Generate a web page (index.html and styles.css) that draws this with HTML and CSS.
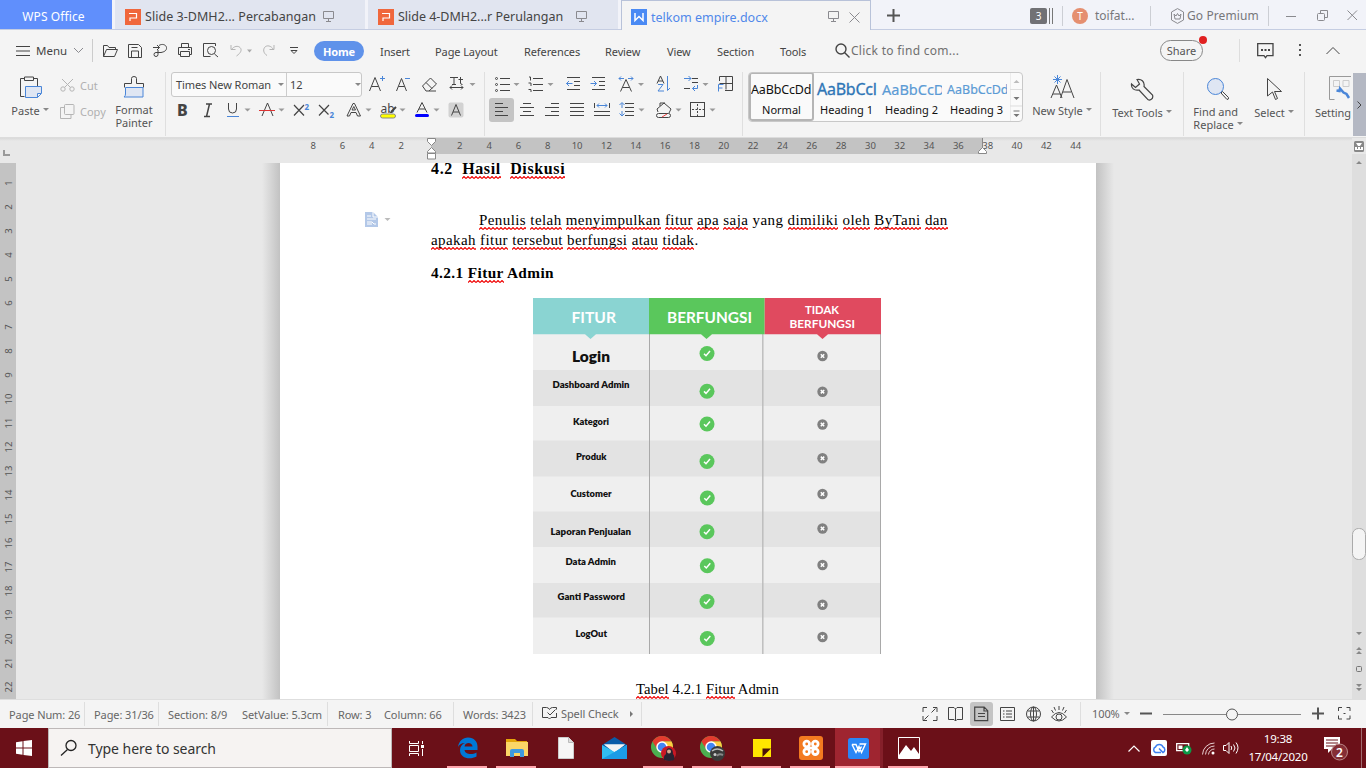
FILE: index.html
```html
<!DOCTYPE html>
<html lang="en">
<head>
<meta charset="utf-8">
<title>telkom empire.docx - WPS Office</title>
<link rel="stylesheet" href="styles.css">
</head>
<body>
<header class="tabs">
  <div class="tab-home">WPS Office</div>
  <div class="tab">
    <svg class="app-icon" width="16" height="16" viewBox="0 0 16 16"><rect width="16" height="16" fill="#f0673c"/><path d="M4 4.500h7.500v4.500H5.500M5 8.500V12" fill="none" stroke="#fff" stroke-width="1.200"/></svg>
    <span class="tab-title t1">Slide 3-DMH2... Percabangan</span>
    <svg width="12" height="12" viewBox="0 0 12 12" class="line gray"><path d="M.5.5h10v7H.5zM5.500 7.500v3M3 10.500h5"/></svg>
  </div>
  <div class="tab">
    <svg class="app-icon" width="16" height="16" viewBox="0 0 16 16"><rect width="16" height="16" fill="#f0673c"/><path d="M4 4.500h7.500v4.500H5.500M5 8.500V12" fill="none" stroke="#fff" stroke-width="1.200"/></svg>
    <span class="tab-title t2">Slide 4-DMH2...r Perulangan</span>
    <svg width="12" height="12" viewBox="0 0 12 12" class="line gray"><path d="M.5.5h10v7H.5zM5.500 7.500v3M3 10.500h5"/></svg>
  </div>
  <div class="tab active">
    <svg class="app-icon" width="16" height="16" viewBox="0 0 16 16"><rect width="16" height="16" fill="#4a8af4"/><path d="M4 4v7.500l4-4 4 4V4" fill="none" stroke="#fff" stroke-width="1.500"/></svg>
    <span class="tab-title t3">telkom empire.docx</span>
    <svg width="12" height="12" viewBox="0 0 12 12" class="line gray"><path d="M.5.5h10v7H.5zM5.500 7.500v3M3 10.500h5"/></svg>
    <svg class="close line gray" width="11" height="11" viewBox="0 0 11 11"><path d="M.5.5l10 10M10.500.5l-10 10"/></svg>
  </div>
  <svg class="plus" width="13" height="13" viewBox="0 0 13 13"><path d="M6.500 0v13M0 6.500h13" stroke="#555" stroke-width="2"/></svg>
  <div class="window-bar">
    <div class="badge">3</div>
    <div class="bars"></div>
    <i class="vsep"></i>
    <div class="avatar">T</div>
    <span class="user">toifat...</span>
    <i class="vsep"></i>
    <svg width="15" height="16" viewBox="0 0 15 16" class="line gray"><path d="M7.500.6l6 3.400v8l-6 3.400-6-3.400V4zM4 6l1 5h5l1-5-2 2-1.500-2.500L6 8z"/></svg>
    <span class="premium">Go Premium</span>
    <i class="vsep"></i>
    <svg width="11" height="11" viewBox="0 0 11 11" class="line gray"><path d="M0 6.500h10"/></svg>
    <svg width="12" height="12" viewBox="0 0 12 12" class="line gray"><rect x=".5" y="3.500" width="7" height="7" rx="1"/><path d="M3.500 3V.5h7v7H8"/></svg>
    <svg width="11" height="11" viewBox="0 0 11 11" class="line gray"><path d="M.5.5l9.500 9.500M10 .5L.5 10"/></svg>
  </div>
</header>

<nav class="menubar">
  <svg width="15" height="12" viewBox="0 0 15 12" class="line"><path d="M0 1.500h14M0 6h14M0 10.500h14"/></svg>
  <span class="menu-word">Menu</span>
  <svg width="11" height="7" viewBox="0 0 11 7" class="line gray"><path d="M1 1l4.500 4.500L10 1"/></svg>
  <i class="msep"></i>
  <svg width="17" height="14" viewBox="0 0 17 14" class="line"><path d="M1.500 12.500V1.500h4l1.500 2h6.500v2M1.500 12.500l3-7h11l-3 7z"/></svg>
  <svg width="17" height="14" viewBox="0 0 17 14" class="line"><path d="M1.500.5h10l3 3v10h-13zM4.500 13v-6h7v6M4.500 3.500h6"/></svg>
  <svg width="17" height="16" viewBox="0 0 17 16" class="line"><path d="M0 4.500h6.500M4 2l2.500 2.500L4 7M6 2.500c3-2 7-1 7.500 2S11 9 8 9.500H3a2 2 0 1 0 2 2V7"/></svg>
  <svg width="17" height="15" viewBox="0 0 17 15" class="line"><path d="M4.500 4V.5h7V4M3.500 11.500h-2v-7h13v7h-2M3.500 8.500h9v5h-9zM11 6.500h2"/></svg>
  <svg width="17" height="15" viewBox="0 0 17 15" class="line"><path d="M12.500 3V.5H.5v13h7M11.500 11l3.500 3"/><circle cx="8.500" cy="7.500" r="4"/></svg>
  <svg width="13" height="13" viewBox="0 0 13 13" class="line pale"><path d="M1 1v4.500h4.500M1.500 5.500C4 2 8 1.500 10 3.500s1.500 5-3.500 8.500"/></svg>
  <svg width="6" height="4" viewBox="0 0 6 4"><path d="M0 .5h5L2.500 3.500z" fill="#aaa"/></svg>
  <svg width="13" height="13" viewBox="0 0 13 13" class="line pale"><path d="M12 1v4.500H7.500M11.500 5.500C9 1.500 5 1 3 3s-2 6 2 8.500"/></svg>
  <svg width="9" height="8" viewBox="0 0 9 8" class="line"><path d="M0 .5h8M1 3.500h6L4 6.500z"/></svg>
  <span class="home">Home</span>
  <span class="mi">Insert</span><span class="mi">Page Layout</span><span class="mi">References</span><span class="mi">Review</span><span class="mi">View</span><span class="mi">Section</span><span class="mi">Tools</span>
  <svg width="16" height="17" viewBox="0 0 16 17" class="line"><g stroke-width="1.400"><circle cx="6" cy="7" r="5"/><path d="M9.500 10.500l5 5"/></g></svg>
  <span class="find">Click to find com...</span>
  <span class="share">Share</span>
  <i class="msep light"></i>
  <svg width="17" height="17" viewBox="0 0 17 17" class="line"><path d="M.7 1.700h15.300v12H10l-1.500 2-1.500-2H.7z" stroke-width="1.300"/><path d="M4 8h2M7.500 8h2M11 8h2" stroke-width="2"/></svg>
  <svg width="3" height="13" viewBox="0 0 3 13" fill="#555"><path d="M0 0h2v2H0zM0 5h2v2H0zM0 10h2v2H0z"/></svg>
  <svg width="15" height="8" viewBox="0 0 15 8" class="line"><path d="M.5 7l6.500-6.500L13.500 7"/></svg>
</nav>

<section class="ribbon">
  <div class="tool paste">
    <svg width="24" height="24" viewBox="18 75 24 24" class="line"><path d="M24 78.500h-3.500v18h4M34 78.500h3.500V86M24.500 77h9v3.500h-9z"/><path d="M25.500 86.500h16v7l-4 4h-12zM41 93.500h-3.500v4" stroke="#4a86d8" fill="#dfe6f3"/></svg>
    <div>Paste<b class="caret"></b></div>
  </div>
  <div class="clip">
    <div><svg width="15" height="14" viewBox="0 0 15 14" class="line pale"><circle cx="3" cy="11" r="2.200"/><circle cx="12" cy="11" r="2.200"/><path d="M2 1l8.500 8.500M13 1L4.500 9.500"/></svg><span>Cut</span></div>
    <div><svg width="15" height="15" viewBox="0 0 15 15" class="line pale"><rect x="4.500" y=".5" width="9.500" height="10" rx="1"/><path d="M4 3.500H.5v11H11V11"/></svg><span>Copy</span></div>
  </div>
  <div class="tool painter">
    <svg width="24" height="24" viewBox="122 75 24 24" class="line"><path d="M124.500 87.500v-4h7v-5q0-2 2.500-2t2.500 2v5h7v4"/><path d="M125.500 87.500h17.500v9.500h-19q1.500-1 1.500-3z" stroke="#4a86d8" fill="#dfe6f3"/></svg>
    <div>Format<br>Painter</div>
  </div>
  <i class="rsep"></i>

  <div class="group font-group">
    <div class="row">
      <div class="combo"><span class="family">Times New Roman</span><b class="caret"></b><span class="size">12</span><b class="caret"></b></div>
      <svg width="27" height="24" viewBox="366 72 27 24" class="line"><path d="M369.500 91l5.500-13.500 5.500 13.500M371.500 86.500h7"/><path d="M380 78.500h5M382.500 76v5" class="blue"/></svg>
      <svg width="27" height="24" viewBox="393 72 27 24" class="line"><path d="M396.500 91l5-12.500 5 12.500M398.500 86.500h6"/><path d="M405 78.500h5" class="blue"/></svg>
      <svg width="26" height="24" viewBox="420 72 26 24" class="line"><path d="M422.500 86l8-8 6 6-7.500 7h-3zM426 82.500l6 6M429 91h7"/></svg>
      <svg width="30" height="24" viewBox="446 72 30 24" class="line"><path d="M450 77.500h8M454 77.500v7M452 84.500h4M460.500 77v6q0 1.500 2 1.500M458.500 79.500h4.500M450 87.500h13M452 85.500l-2 2 2 2M461 85.500l2 2-2 2"/><path d="M469.500 83h6l-3 3z" class="tri"/></svg>
    </div>
    <div class="row">
      <svg width="25" height="24" viewBox="171 98 25 24"><text x="177" y="116" class="glyph bold">B</text></svg>
      <svg width="26" height="24" viewBox="196 98 26 24" class="line"><path d="M206 104h6M204 116.500h6M209.500 104l-3 12.500" stroke-width="1.500"/></svg>
      <svg width="34" height="24" viewBox="222 98 34 24" class="line"><path d="M228.500 103v6q0 4 4 4t4-4v-6"/><path d="M227 116.500h12" class="blue"/><path d="M244.500 108.500h6l-3 3z" class="tri"/></svg>
      <svg width="34" height="24" viewBox="256 98 34 24" class="line"><path d="M262 116l5.500-13 5.500 13"/><path d="M259 110.500h16" stroke="#d33"/><path d="M278.500 108.500h6l-3 3z" class="tri"/></svg>
      <svg width="26" height="24" viewBox="290 98 26 24" class="line"><path d="M294 105l10 10.500M304 105l-10 10.500" stroke-width="1.200"/><text x="304.500" y="109.500" class="num">2</text></svg>
      <svg width="26" height="24" viewBox="316 98 26 24" class="line"><path d="M319 105l9.500 9.500M329 105l-10 10.500" stroke-width="1.200"/><text x="329.500" y="117.500" class="num">2</text></svg>
      <svg width="34" height="24" viewBox="342 98 34 24" class="line"><path d="M347 116l6-12.500h1.500l6 12.500h-3l-1.500-3.500h-5l-1.500 3.500zM352 110h3.500l-1.700-3.500z"/><path d="M365.500 108.500h6l-3 3z" class="tri"/></svg>
      <svg width="34" height="24" viewBox="376 98 34 24"><rect x="380.500" y="114" width="15" height="4" rx="2" fill="#ff0" stroke="#888"/><text x="380.500" y="112.500" class="glyph ab">ab</text><path d="M391 112l5-5" stroke="#444" stroke-width="2"/><path d="M399.500 108.500h6l-3 3z" class="tri"/></svg>
      <svg width="36" height="24" viewBox="410 98 36 24" class="line"><path d="M417 112.500l5-10 5 10M419 109h6"/><rect x="415" y="114" width="14" height="3" rx="1.500" fill="#00f" stroke="none"/><path d="M433.500 108.500h6l-3 3z" class="tri"/></svg>
      <svg width="24" height="24" viewBox="446 98 24 24" class="line"><rect x="448.500" y="102.500" width="15" height="15" rx="2" fill="#d2d2d2" stroke="none"/><path d="M451.500 115.500l4.500-11 4.500 11M453 112h6"/></svg>
    </div>
  </div>
  <i class="rsep"></i>

  <div class="group para-group">
    <div class="row">
      <svg width="33" height="24" viewBox="489 72 33 24" class="line"><path d="M500 78.500h10M500 84.500h10M500 90.500h10"/><circle cx="496.500" cy="78.500" r="1"/><circle cx="496.500" cy="84.500" r="1"/><circle cx="496.500" cy="90.500" r="1"/><path d="M513.500 83h6l-3 3z" class="tri"/></svg>
      <svg width="38" height="24" viewBox="522 72 38 24" class="line"><path d="M533 78.500h10M533 84.500h10M533 90.500h10M529 77h1.500v3.500M528.500 83h2.500v3M528.500 89.500h2.500v2.500"/><path d="M547.500 83h6l-3 3z" class="tri"/></svg>
      <svg width="26" height="24" viewBox="560 72 26 24" class="line"><path d="M567 77.500h13M574 81.500h6M574 85.500h6M567 89.500h13"/><path d="M566.500 83.500h6M569 81l-2.500 2.500 2.500 2.500" class="blue"/></svg>
      <svg width="27" height="24" viewBox="586 72 27 24" class="line"><path d="M592 77.500h13M599 81.500h6M599 85.500h6M592 89.500h13"/><path d="M590.500 83.500h6M594 81l2.500 2.500-2.500 2.500" class="blue"/></svg>
      <svg width="37" height="24" viewBox="613 72 37 24" class="line"><path d="M620.500 91.500l5.500-12 5.500 12M622.500 87.500h7"/><path d="M619 78.500h5M621 76.500l-2 2 2 2M628 78.500h5M631 76.500l2 2-2 2" class="blue"/><path d="M638 83h6l-3 3z" class="tri"/></svg>
      <svg width="30" height="24" viewBox="650 72 30 24" class="line"><path d="M657 83.500l3.500-7.500 3.500 7.500M658 81h5"/><path d="M658 84.500h5l-5 6.500h6M667.500 76v14.500l2.500-2.500" class="blue"/></svg>
      <svg width="34" height="24" viewBox="680 72 34 24" class="line"><path d="M692 82.500h6M684 88.500h6M692 78.500h6"/><path d="M684 78.500h7M688.500 76l2.500 2.500-2.500 2.500M697.500 85v3.500h-5M695 86l-2.500 2.500 2.500 2.500" class="blue"/><path d="M702.500 83h6l-3 3z" class="tri"/></svg>
      <svg width="24" height="24" viewBox="714 72 24 24" class="line"><path d="M719.500 81v-4.500h13v14H725M726 76.500v13M719.500 83.500h13"/><path d="M718.500 91.500v-7h5M718.500 88h4" class="blue"/></svg>
    </div>
    <div class="row">
      <svg width="25" height="24" viewBox="489 98 25 24" class="line selected"><path d="M495 103.500h8M495 107.500h13M495 111.500h8M495 115.500h13"/></svg>
      <svg width="25" height="24" viewBox="514 98 25 24" class="line"><path d="M523 103.500h8M520 107.500h14M523 111.500h8M520 115.500h14"/></svg>
      <svg width="25" height="24" viewBox="539 98 25 24" class="line"><path d="M551 103.500h8M545 107.500h14M551 111.500h8M545 115.500h14"/></svg>
      <svg width="25" height="24" viewBox="564 98 25 24" class="line"><path d="M570 103.500h14M570 107.500h14M570 111.500h14M570 115.500h14"/></svg>
      <svg width="26" height="24" viewBox="589 98 26 24" class="line"><path d="M594.500 103v5M609.500 103v5M594 111.500h16M594 115.500h16"/><path d="M597 105.500h10M599 103.500l-2 2 2 2M605 103.500l2 2-2 2" class="blue"/></svg>
      <svg width="35" height="24" viewBox="615 98 35 24" class="line"><path d="M625 103.500h9M625 107.500h9M625 111.500h9M625 115.500h9"/><path d="M622 103v5M619.500 105l2.500-2.500 2.500 2.500M622 111v5M619.500 113.500l2.500 2.500 2.500-2.500" class="blue"/><path d="M638.500 108.500h6l-3 3z" class="tri"/></svg>
      <svg width="35" height="24" viewBox="650 98 35 24" class="line"><path d="M658 112l-1-3 7-6 7 6-2 4M660 106v-3h5"/><rect x="656.500" y="113.500" width="14" height="4" rx="2"/><path d="M662 117l5-3" stroke="#e44"/><path d="M675.500 108.500h6l-3 3z" class="tri"/></svg>
      <svg width="35" height="24" viewBox="685 98 35 24" class="line"><rect x="690.500" y="102.500" width="14" height="14"/><path d="M697.500 104v12M692 109.500h12" stroke-dasharray="2 1.500"/><path d="M709.500 108.500h6l-3 3z" class="tri"/></svg>
    </div>
  </div>
  <i class="rsep"></i>

  <div class="styles">
    <div class="style current"><span class="sample s0">AaBbCcDd</span><span>Normal</span></div>
    <div class="style"><span class="sample s1">AaBbCcl</span><span>Heading 1</span></div>
    <div class="style"><span class="sample s2">AaBbCcD</span><span>Heading 2</span></div>
    <div class="style"><span class="sample s3">AaBbCcDd</span><span>Heading 3</span></div>
    <svg width="12" height="48" viewBox="0 0 12 48"><path d="M0 0v48M0 16.500h12M0 33h12" stroke="#ddd"/><path d="M3.500 10h6l-3-3z" fill="#bbb"/><path d="M3.500 24h6l-3 3zM3.500 41h6l-3 3z" fill="#777"/><path d="M3.500 38h6" stroke="#777"/></svg>
  </div>
  <div class="tool newstyle">
    <svg width="26" height="26" viewBox="1047 74 26 26" class="line"><path d="M1049 98l5.500-13 5.500 13M1051 94h7M1058.500 98l6.500-18.500 7 18.500M1061 92h8"/><path d="M1055.500 75v9M1051 79.500h9M1052.500 76.500l6 6M1058.500 76.500l-6 6" class="blue"/></svg>
    <div>New Style<b class="caret"></b></div>
  </div>
  <i class="rsep"></i>
  <div class="tool texttools">
    <svg width="24" height="24" viewBox="1131 78 24 24" class="line"><path d="M1138 79.500c4-1 8 2 7 7l8.500 8.500q1 3-1.500 4.500t-4-1l-8-8.500c-5 1-8-2-7.500-6l4 3.500 4-3.500z" stroke-width="1.200"/></svg>
    <div>Text Tools<b class="caret"></b></div>
  </div>
  <i class="rsep"></i>
  <div class="tool findreplace">
    <svg width="24" height="24" viewBox="1208 77 24 24" class="line"><circle cx="1217.500" cy="86.500" r="8" fill="#dfe6f3" stroke="#4a86d8"/><path d="M1223 93l1.500-1.500 6 6q.5 2-1.500 2z"/></svg>
    <div class="left">Find and<br>Replace<b class="caret"></b></div>
  </div>
  <div class="tool select">
    <svg width="17" height="24" viewBox="1267 77 17 24" class="line"><path d="M1268.500 78.500V96l5-4 3 7.500 2-1-3-7h7z"/></svg>
    <div>Select<b class="caret"></b></div>
  </div>
  <i class="rsep"></i>
  <div class="tool setting">
    <svg width="22" height="25" viewBox="1329 77 22 25" class="line"><path d="M1351 77.500h-21.500v23h5" stroke="#999"/><path d="M1333.500 81.500h6v6h-6zM1343 81.500h6v6h-6z" stroke="#ccc"/><path d="M1336.500 91.500l3 .5.500-2.500 3.500 4 3 1.500 2.500 4" stroke="#4a86d8" stroke-width="2.500"/></svg>
    <div>Setting</div>
  </div>
  <div class="more"><svg width="5" height="8" viewBox="0 0 5 8" class="line"><path d="M.5.5L4 4 .5 7.500"/></svg></div>
</section>

<main class="editor">
  <div class="hruler">
    <svg class="tabstop" width="7" height="7" viewBox="0 0 7 7"><path d="M1 0v5h6" fill="none" stroke="#999" stroke-width="2"/></svg>
    <div class="ticks"><span>8</span><span>6</span><span>4</span><span>2</span><span></span><span>2</span><span>4</span><span>6</span><span>8</span><span>10</span><span>12</span><span>14</span><span>16</span><span>18</span><span>20</span><span>22</span><span>24</span><span>26</span><span>28</span><span>30</span><span>32</span><span>34</span><span>36</span><span>38</span><span>40</span><span>42</span><span>44</span></div>
    <svg class="indent" width="9" height="22" viewBox="0 0 9 22"><path d="M.5.5h8v3l-4 4-4-4zM4.500 9.500l4 4v1.500h-8v-1.500zM.5 15.500h8v5.500h-8z" fill="#fff" stroke="#888"/></svg>
    <svg class="indent right" width="9" height="17" viewBox="0 0 9 17"><path d="M4.500 0v10" stroke="#888"/><path d="M4.500 9.500l4 4v2h-8v-2z" fill="#fff" stroke="#888"/></svg>
  </div>
  <div class="vruler"><span>1</span><span>2</span><span>3</span><span>4</span><span>5</span><span>6</span><span>7</span><span>8</span><span>9</span><span>10</span><span>11</span><span>12</span><span>13</span><span>14</span><span>15</span><span>16</span><span>17</span><span>18</span><span>19</span><span>20</span><span>21</span><span>22</span></div>
  <div class="canvas">
    <article class="page">
      <h2 class="h42">4.2&nbsp; <u>Hasil</u>&nbsp; <u>Diskusi</u></h2>
      <div class="para">
        <svg class="para-mark" width="28" height="17" viewBox="0 0 28 17"><path d="M0 1h8l5 5v10H0z" fill="#b3c8e8"/><path d="M8 1v5h5M2 5h4M2 8h9M2 11h5l2 2h2M2 13h5" fill="none" stroke="#fff"/><path d="M19.500 7h6l-3 3z" fill="#bbb"/></svg>
        <p class="l1"><u>Penulis</u> <u>telah</u> <u>menyimpulkan</u> <u>fitur</u> <u>apa</u> <u>saja</u> yang <u>dimiliki</u> <u>oleh</u> <u>ByTani</u> <u>dan</u></p>
        <p class="l2"><u>apakah</u> <u>fitur</u> <u>tersebut</u> <u>berfungsi</u> <u>atau</u> <u>tidak</u>.</p>
      </div>
      <h3 class="h421">4.2.1 <u>Fitur</u> Admin</h3>
      <svg class="feature-table" width="348" height="356" viewBox="533 298 348 356">
        <defs>
          <g id="yes"><circle r="7.500" fill="#5ac75c"/><path d="M-3 .2l2 2L3-2.500" fill="none" stroke="#fff" stroke-width="1.500"/></g>
          <g id="no"><circle r="5.200" fill="#808080"/><path d="M-1.700-1.700l3.400 3.400M1.700-1.700l-3.400 3.400" stroke="#fff" stroke-width="1.500"/></g>
        </defs>
        <path d="M533 334h348v320H533z" fill="#efefef"/>
        <path d="M533 370h348v36H533zM533 440.500h348v36H533zM533 511.500h348v35.500H533zM533 583h348v34.500H533z" fill="#e3e3e3"/>
        <path d="M649.500 334v320M880.500 334v320" stroke="#a9a9a9"/><path d="M762.800 334v320" stroke="#bdbdbd" stroke-width="1.500"/>
        <path d="M533 298h116v36.300h-53l-5.500 4.700-5.500-4.700h-52z" fill="#8ad4d2"/>
        <path d="M649 298h115.700v36.300h-52.700l-5.500 4.700-5.500-4.700h-52z" fill="#5ac75c"/>
        <path d="M764.700 298H881v36.300h-53l-5.500 4.700-5.500-4.700h-52.300z" fill="#e04a5f"/>
        <g fill="#fff" class="th">
          <text x="571.500" y="323" font-size="14.500" textLength="44.500" lengthAdjust="spacingAndGlyphs">FITUR</text>
          <text x="667" y="323" font-size="14.500" textLength="85" lengthAdjust="spacingAndGlyphs">BERFUNGSI</text>
          <text x="805" y="314" font-size="11.500" textLength="34" lengthAdjust="spacingAndGlyphs">TIDAK</text>
          <text x="789.500" y="327.500" font-size="11.500" textLength="65.500" lengthAdjust="spacingAndGlyphs">BERFUNGSI</text>
        </g>
        <g class="td" fill="#111">
          <text x="572" y="361.500" font-size="15" textLength="38" lengthAdjust="spacingAndGlyphs">Login</text>
          <text x="552.500" y="387.500" textLength="77" lengthAdjust="spacingAndGlyphs">Dashboard Admin</text>
          <text x="573" y="424.500" textLength="36" lengthAdjust="spacingAndGlyphs">Kategori</text>
          <text x="576" y="460" textLength="30.500" lengthAdjust="spacingAndGlyphs">Produk</text>
          <text x="570.500" y="497" textLength="41" lengthAdjust="spacingAndGlyphs">Customer</text>
          <text x="550.500" y="535" textLength="80.500" lengthAdjust="spacingAndGlyphs">Laporan Penjualan</text>
          <text x="565.500" y="565" textLength="50.500" lengthAdjust="spacingAndGlyphs">Data Admin</text>
          <text x="557.500" y="600" textLength="67.500" lengthAdjust="spacingAndGlyphs">Ganti Password</text>
          <text x="575.500" y="636.500" textLength="31.500" lengthAdjust="spacingAndGlyphs">LogOut</text>
        </g>
        <use href="#yes" x="707" y="353.500"/><use href="#yes" x="707" y="391.200"/><use href="#yes" x="707" y="424"/><use href="#yes" x="707" y="461.500"/><use href="#yes" x="707.300" y="498"/><use href="#yes" x="707" y="531.800"/><use href="#yes" x="707.300" y="565.800"/><use href="#yes" x="707" y="601.500"/><use href="#yes" x="707.300" y="638.500"/>
        <use href="#no" x="822.500" y="356"/><use href="#no" x="822.500" y="391.700"/><use href="#no" x="822.500" y="424.500"/><use href="#no" x="822.500" y="458.300"/><use href="#no" x="822.500" y="494"/><use href="#no" x="822.500" y="528.500"/><use href="#no" x="822.500" y="565"/><use href="#no" x="822.500" y="604.800"/><use href="#no" x="822.500" y="637"/>
      </svg>
      <p class="caption"><u>Tabel</u> 4.2.1 <u>Fitur</u> Admin</p>
    </article>
  </div>
  <aside class="scrollbar">
    <svg width="14" height="562" viewBox="1352 138 14 562"><path d="M1352 154h14v546h-14z" fill="#dedede"/><rect x="1354" y="141" width="10" height="11" rx="1.500" fill="#888"/><path d="M1356 143h6l-2 3h-2zM1355 147h8v3h-8z" fill="#fff"/><path d="M1357.500 147v2M1360.500 147v2" stroke="#888"/><path d="M1356 164h6l-3-3zM1356 632h6l-3 3zM1356 650h6l-3-3zM1356 654h6l-3-3zM1356 684h6l-3 3zM1356 688h6l-3 3z" fill="#888"/><rect x="1352.500" y="528.500" width="13" height="31" rx="6" fill="#f4f4f4" stroke="#aaa"/><rect x="1356.500" y="666.500" width="5" height="5" rx="1" fill="none" stroke="#777"/></svg>
  </aside>
</main>

<footer class="status">
  <span>Page Num: 26</span><i></i><span>Page: 31/36</span><i></i><span>Section: 8/9</span><span>SetValue: 5.3cm</span><i></i><span>Row: 3</span><span>Column: 66</span><i></i><span>Words: 3423</span><i></i>
  <svg width="16" height="13" viewBox="0 0 16 13" class="line"><path d="M7.500 2.500q-1-2-3-2H.5v10H6l1.500 1.500L9 10.500h5.500V6M7.500 2.500q1-2 3-2h4v2M5.500 5.500L8 8l5.500-5.500"/></svg>
  <span class="spell">Spell Check</span>
  <svg width="4" height="6" viewBox="0 0 4 6"><path d="M0 0v6l3-3z" fill="#777"/></svg>
  <i></i>
  <svg width="16" height="16" viewBox="0 0 16 16" class="line"><path d="M1 6V1.500h4M11 1.500h4V6M15 10v4.500h-4M5 14.500H1V10M9.500 6.500l4-4M2.500 13.500l4-4"/></svg>
  <svg width="16" height="16" viewBox="0 0 16 16" class="line"><path d="M7.500 3L6 1.500H.5v12H6L7.500 15 9 13.500h5.500v-12H9zM7.500 3v12"/></svg>
  <div class="view-on"><svg width="15" height="16" viewBox="0 0 15 16" class="line"><path d="M.7 1.200h9.500l3.500 3.500v10H.7zM10 1v4h4M4 7.500h7M4 10.500h7" stroke-width="1.200"/></svg></div>
  <svg width="16" height="16" viewBox="0 0 16 16" class="line"><path d="M.5 1.500h14v13H.5zM3 5h1.500M6 5h6M3 8h1.500M6 8h6M3 11h1.500M6 11h6"/></svg>
  <svg width="16" height="16" viewBox="0 0 16 16" class="line"><circle cx="7.500" cy="8" r="7"/><ellipse cx="7.500" cy="8" rx="3" ry="7"/><path d="M7.500 1v14M1.500 5h12M1.500 11h12"/></svg>
  <svg width="17" height="16" viewBox="0 0 17 16" class="line"><path d="M.5 11q7.500-9 15 0-7.500 8-15 0M3 1l1.500 3.500M8 0v4M13 1l-1.500 3.500M.5 4l2 3M15.500 4l-2 3"/><circle cx="8" cy="11" r="3"/></svg>
  <i></i>
  <span class="pct">100%</span>
  <b class="caret"></b>
  <svg width="12" height="13" viewBox="0 0 12 13"><path d="M0 6.500h12" stroke="#555" stroke-width="2"/></svg>
  <svg width="138" height="14" viewBox="0 0 138 14"><path d="M0 7.500h138" stroke="#888"/><circle cx="69" cy="7.500" r="5.500" fill="#f4f4f4" stroke="#555"/></svg>
  <svg width="12" height="13" viewBox="0 0 12 13"><path d="M0 6.500h12M6 .5v12" stroke="#555" stroke-width="2"/></svg>
  <svg width="13" height="13" viewBox="0 0 13 13" class="line"><path d="M.5 4V.5H4M8.500.5H12V4M12 8.500V12H8.500M4 12H.5V8.500M5.500 6.500h2"/></svg>
</footer>

<div class="taskbar">
  <div class="start"><svg width="16" height="16" viewBox="0 0 16 16" fill="#fff"><path d="M0 2.200L6.500 1.300v6.200H0zM7.500 1.100L16 0v7.500H7.500zM0 8.500h6.500v6.200L0 13.800zM7.500 8.500H16V16l-8.500-1.100z"/></svg></div>
  <div class="search"><svg width="18" height="18" viewBox="0 0 18 18"><g fill="none" stroke="#222" stroke-width="1.300"><circle cx="11" cy="6.500" r="5"/><path d="M7.500 10.500L1 16.500"/></g></svg><span>Type here to search</span></div>
  <div class="taskview"><svg width="17" height="15" viewBox="0 0 17 15"><path d="M1.500 0v2.500h9V0M1.500 15v-2.500h9V15M1.500 4.500h9v6h-9zM14.500 0v3M14.500 8v7" fill="none" stroke="#fff"/><path d="M13 4h3v3h-3z" fill="#fff"/></svg></div>
  <div class="app open"><svg width="22" height="22" viewBox="0 0 22 22"><path d="M1 10C2 4 6 .5 11 .5c6 0 9.500 4 9.500 9V13H7.500c.5 4 7 5.500 12 2.500v4C13 23 3 21.500 3 13c0-3 2-6 5-7-4 0-6 2-7 4m6.500-.5h8c0-4-7-5-8 0" fill="#0078d7"/></svg></div>
  <div class="app open"><svg width="22" height="20" viewBox="0 0 22 20"><path d="M0 1h9l2 2h10v5H0z" fill="#e5a50a"/><path d="M0 4h22v14H0z" fill="#fcd667"/><path d="M4 19v-6q0-2 2-2h10q2 0 2 2v6h-4v-4H8v4z" fill="#3f9ae0"/></svg></div>
  <div class="app"><svg width="16" height="22" viewBox="0 0 16 22"><path d="M.5.500h10l5 5v16H.5z" fill="#f6f6f6" stroke="#ccc"/><path d="M10.500.500v5h5" fill="#ddd" stroke="#bbb"/></svg></div>
  <div class="app"><svg width="25" height="22" viewBox="0 0 25 22"><path d="M0 8l12.500-8L25 8v14H0z" fill="#0a5ca8"/><path d="M2 7.500h21L12.500 16z" fill="#f4f4f4"/><path d="M0 8l12.500 7L25 8v14H0z" fill="#31bdf2"/><path d="M2 7.500h21l-10.500 6z" fill="#f4f4f4"/><path d="M0 22L25 8v14z" fill="#1b9be6"/></svg></div>
  <div class="app open"><svg width="25" height="25" viewBox="0 0 25 25"><circle cx="11" cy="11" r="11" fill="#4caf50"/><path d="M1.500 5.500A11 11 0 0 1 20.500 5.500H11L6 13z" fill="#e33b2e"/><path d="M20.500 5.500A11 11 0 0 1 11 22l5-8-5-8.500z" fill="#ffcd40"/><circle cx="11" cy="11" r="5" fill="#4285f4" stroke="#fff" stroke-width="1.500"/><circle cx="17.500" cy="17.500" r="7.500" fill="#c91824"/><path d="M13 24q-1-4 2-6 0-6 3-6 4 0 4 6 2 2 1 6-5 2-10 0" fill="#282332"/><circle cx="18" cy="15.500" r="2" fill="#d8a58c"/></svg></div>
  <div class="app open"><svg width="25" height="25" viewBox="0 0 25 25"><circle cx="11" cy="11" r="11" fill="#4caf50"/><path d="M1.500 5.500A11 11 0 0 1 20.500 5.500H11L6 13z" fill="#e33b2e"/><path d="M20.500 5.500A11 11 0 0 1 11 22l5-8-5-8.500z" fill="#ffcd40"/><circle cx="11" cy="11" r="5" fill="#4285f4" stroke="#fff" stroke-width="1.500"/><circle cx="17.500" cy="17.500" r="7.500" fill="#3a3a3a"/><path d="M12 15q5-4 11 0" fill="none" stroke="#bbb" stroke-width="1.500"/><circle cx="15" cy="18.500" r="1.500" fill="#ccc"/><path d="M17 20q2-3 6-1" fill="none" stroke="#888" stroke-width="2"/></svg></div>
  <div class="app open"><svg width="18" height="18" viewBox="0 0 18 18"><path d="M0 0h18v18H0z" fill="#ffe600"/><path d="M9.500 9.500H18L9.500 18z" fill="#4a1208"/></svg></div>
  <div class="app open"><svg width="24" height="24" viewBox="0 0 24 24"><rect width="24" height="24" rx="3" fill="#f37a20"/><g fill="none" stroke="#fff" stroke-width="2.800"><circle cx="7.700" cy="8" r="2.800"/><circle cx="16.300" cy="8" r="2.800"/><circle cx="7.700" cy="15.700" r="2.800"/><circle cx="16.300" cy="15.700" r="2.800"/><path d="M9 12h6"/></g></svg></div>
  <div class="app open current-app"><svg width="21" height="21" viewBox="0 0 21 21"><rect width="21" height="21" rx="2.500" fill="#2b86f6"/><path d="M4 6.500h4l3 7 2.500-5M4 6.500l4 8 3-6 2.500 6 4-8.500h-6" fill="none" stroke="#fff" stroke-width="1.400"/></svg></div>
  <div class="app open"><svg width="22" height="22" viewBox="0 0 22 22"><path d="M.5.500h21v21H.5z" fill="#6b1018" stroke="#fff"/><path d="M1 18l7-10 5 6 3-4 5 7v5H1z" fill="#fff"/></svg></div>
  <div class="tray">
    <svg width="12" height="7" viewBox="0 0 12 7"><path d="M.5 6.500L6 1l5.500 5.500" fill="none" stroke="#fff" stroke-width="1.200"/></svg>
    <svg width="16" height="16" viewBox="0 0 16 16"><rect width="16" height="16" rx="2" fill="#fff"/><path d="M10 12.500H4.500a3 3 0 0 1 0-5.500 4 4 0 0 1 7.500 0 3 3 0 0 1 0 5.500L8 8.500" fill="none" stroke="#3d7ff0" stroke-width="1.500"/></svg>
    <svg width="16" height="13" viewBox="0 0 16 13"><path d="M.7 1.700h12v7H.7z" fill="none" stroke="#fff" stroke-width="1.300"/><path d="M2.500 3.500h4v3.500h-4z" fill="#fff"/><circle cx="11" cy="8" r="4.500" fill="#0c9a48"/><path d="M11 5l2 3-2 2-2-2zM11 8v4" fill="#fff"/></svg>
    <svg width="13" height="13" viewBox="0 0 13 13"><g fill="none" stroke="#e8cfd0"><path d="M.5 12.500a12 12 0 0 1 12-11.500M3.500 12.500a9 9 0 0 1 9-8.500M6.500 12.500a6 6 0 0 1 6-5.500"/></g><circle cx="11" cy="11" r="1.500" fill="#fff"/></svg>
    <svg width="17" height="14" viewBox="0 0 17 14"><path d="M.5 4.500H3l3-3v11l-3-3H.5zM8 5q1.500 2 0 4M10.500 3.500q3 3.500 0 7M13 1.500q4 5 0 11" fill="none" stroke="#fff"/></svg>
    <div class="clock">19:38<br>17/04/2020</div>
    <svg width="25" height="25" viewBox="0 0 25 25"><path d="M0 1h16v12H8l-4 4v-4H0z" fill="#fff"/><path d="M2 4h12M2 7h12M2 10h9" stroke="#6b1018"/><circle cx="15.500" cy="16" r="8" fill="#852e35" stroke="#b88"/><text x="12" y="20.500" class="note">2</text></svg>
    <i class="desk"></i>
  </div>
</div>
</body>
</html>
```
FILE: styles.css
```css
* { box-sizing: border-box; }
body { margin: 0; width: 1366px; height: 768px; overflow: hidden; display: grid; grid-template-rows: 30px 38px 70px 561px 29px 40px; font-family: "Noto Sans", "Open Sans", sans-serif; font-size: 11px; color: #444; background: #f4f4f4; }
svg { display: block; flex: none; }
p, h2, h3 { margin: 0; }
.line { fill: none; stroke: #444; stroke-width: 1; }
.line.gray { stroke: #8a8a8f; }
.line.pale { stroke: #b5b5b5; }
.line .blue { stroke: #4a86d8; }
.tri { fill: #999; stroke: none; }
.caret { display: inline-block; border: 3px solid transparent; border-top: 3px solid #888; border-bottom: 0; }

.tabs { display: flex; align-items: stretch; background: #f2f3f9; box-shadow: inset 0 -1px #c5cde2; }
.tab-home { width: 112px; height: 29px; margin-right: 3px; background: #608ffc; color: #fff; font-size: 12px; line-height: 33px; text-align: center; padding-right: 5px; letter-spacing: .1px; }
.tab { width: 250px; height: 29px; margin-right: 3px; padding: 4px 0 0 10px; background: #e1e5f0; display: flex; align-items: center; }
.tab-title { font-size: 12.5px; margin-left: 4px; white-space: nowrap; }
.t1 { width: 178px; letter-spacing: .04px; }
.t2 { width: 178px; letter-spacing: -.02px; }
.t3 { width: 177px; color: #5088ea; }
.tab.active { height: 30px; background: #f4f4f4; border: 1px solid #b8c2d9; border-bottom: 0; padding-left: 9px; padding-top: 3px; }
.close { margin-left: 9px; }
.plus { margin: 9px 0 0 13px; }
.window-bar { margin-left: 130px; display: grid; grid-template-columns: 19px 13px 10px 23px 55px 20px 17px 81px 18px 31px 30px 1fr; align-items: center; color: #77777b; padding-top: 1px; }
.badge { width: 17px; height: 16px; border-radius: 2px; background: #717175; color: #fff; text-align: center; line-height: 16px; font-size: 10px; }
.bars { width: 4px; height: 16px; border: solid #777; border-width: 0 1px; }
.vsep { width: 1px; height: 20px; background: #ccced4; }
.avatar { width: 16px; height: 16px; border-radius: 50%; background: #e58f70; color: #fff; text-align: center; line-height: 16px; font-size: 10px; }
.user, .premium { font-size: 12px; white-space: nowrap; }
.premium { letter-spacing: .1px; }

.menubar { display: grid; padding: 3px 0 0 16px; align-items: center; white-space: nowrap; grid-template-columns: 20px 37px 19px 10px 25px 26px 24px 26px 27px 17px 15px 28px 24px 66px 55px 89px 81px 62px 50px 63px 55px 16px 309px 79px 18px 42px 27px 1fr; }
.menu-word { font-size: 11.5px; }
.msep { width: 1px; height: 23px; background: #ccc; }
.msep.light { background: #ddd; }
.home { width: 50px; height: 20px; border-radius: 10px; background: #5f92ea; color: #fff; font-weight: bold; text-align: center; line-height: 21px; letter-spacing: -.2px; }
.mi { padding-top: 2px; letter-spacing: -.1px; }
.find { font-size: 12px; color: #707070; letter-spacing: .27px; }
.share { width: 43px; height: 21px; border: 1px solid #888; border-radius: 11px; text-align: center; line-height: 19px; color: #555; position: relative; }
.share::after { content: ""; position: absolute; right: -5px; top: -5px; width: 8px; height: 8px; border-radius: 50%; background: #e02020; }

.ribbon { display: flex; align-items: flex-start; box-shadow: inset 0 -1px #dcdcdc; padding-top: 4px; white-space: nowrap; line-height: 13px; color: #555; }
.ribbon > * { flex: none; }
.tool { display: flex; flex-direction: column; align-items: center; }
.tool .caret { margin: 0 0 4px 3px; }
.rsep { width: 1px; height: 64px; background: #dfdfdf; }
.paste { width: 48px; margin-left: 6px; padding-top: 3px; }
.paste > div { margin-top: 5px; }
.clip { width: 52px; margin-left: 6px; color: #b0b0b0; }
.clip > div { display: flex; align-items: center; gap: 5px; height: 26px; }
.painter { width: 44px; padding-top: 3px; text-align: center; }
.painter > div { margin-top: 4px; }
.painter + .rsep { margin-left: 9px; }
.group { height: 52px; }
.font-group { width: 305px; margin-left: 5px; margin-right: 8px; }
.para-group { width: 249px; margin-left: 4px; margin-right: 4px; }
.row { display: flex; height: 26px; }
.combo { width: 191px; height: 25px; border: 1px solid #c8c8c8; border-radius: 3px; background: #fafafa; display: flex; align-items: center; margin-right: 4px; color: #444; }
.family { width: 106px; padding-left: 4px; letter-spacing: -.08px; }
.size { width: 69px; margin-left: 2px; border-left: 1px solid #ccc; padding-left: 3px; line-height: 23px; }
.glyph { font: 15px "Noto Sans", sans-serif; fill: #444; }
.glyph.bold { font-weight: 800; font-size: 16px; }
.glyph.ab { font-size: 12px; }
.num { font: bold 8px "Noto Sans", sans-serif; fill: #4a86d8; stroke: none; }
.selected { background: radial-gradient(#c4c4c4, #c4c4c4); border-radius: 3px; }
.styles { width: 275px; height: 50px; margin-left: 5px; border: 1px solid #c8c8c8; border-radius: 4px; background: #fafafa; display: flex; color: #111; overflow: hidden; }
.style { width: 65px; height: 48px; overflow: hidden; text-align: center; flex: none; padding: 0 2px; line-height: 12px; }
.style.current { border: 2px solid #b5b5b5; border-radius: 3px; padding: 0; margin-top: -1px; height: 49px; }
.style.current .sample { height: 30px; line-height: 32px; padding-left: 0; }
.style span { display: block; }
.sample { overflow: hidden; text-align: left; height: 31px; line-height: 33px; padding-left: 1px; }
.s0 { font-size: 12.5px; letter-spacing: -.15px; }
.s1 { font-size: 16px; color: #2e75b6; letter-spacing: -.25px; -webkit-text-stroke: .3px #2e75b6; }
.s2 { font-size: 14.5px; color: #5b9bd5; -webkit-text-stroke: .2px #5b9bd5; }
.s3 { font-size: 12.5px; color: #5b9bd5; -webkit-text-stroke: .2px #5b9bd5; }
.styles > svg { margin-left: 1px; }
.newstyle { width: 76px; margin-left: 1px; padding-top: 2px; }
.newstyle > div { margin-top: 4px; }
.texttools { width: 82px; padding-top: 6px; }
.texttools > div { margin-top: 4px; }
.findreplace { width: 68px; padding-top: 5px; }
.findreplace > div { margin-top: 4px; }
.left { text-align: left; }
.select { width: 44px; margin-right: 8px; padding-top: 5px; }
.select > div { margin-top: 5px; }
.setting { width: 36px; margin-left: 10px; align-items: flex-end; padding-top: 4px; }
.setting > div { margin-top: 5px; width: 36px; letter-spacing: -.1px; }
.more { margin-left: auto; margin-top: 1px; width: 13px; height: 63px; background: #b4b8c3; display: grid; place-items: center; }

.editor { display: grid; grid-template: 25px 536px / 16px 1336px 14px; background: #e8e8e8; overflow: hidden; }
.hruler { grid-column: 1 / 3; position: relative; background: linear-gradient(#c3c3c3, #c3c3c3) 431px 0 / 552px 16px no-repeat, linear-gradient(#d9d9d9, #e8e8e8 3px); }
.tabstop { position: absolute; left: 3px; top: 12px; }
.ticks { display: flex; padding-left: 298.5px; height: 16px; font-size: 9.5px; line-height: 16px; color: #555; }
.ticks span { width: 29.34px; flex: none; text-align: center; }
.indent { position: absolute; left: 427px; top: 0; }
.indent.right { left: 978px; }
.vruler { background: #c3c3c3; padding-top: 7.5px; font-size: 9.5px; color: #555; }
.vruler span { display: grid; place-items: center; height: 24.03px; width: 16px; transform: rotate(-90deg); }
.canvas { overflow: hidden; }
.scrollbar { grid-column: 3; grid-row: 1 / 3; }
.page { height: 536px; width: 852px; margin-left: 246px; padding: 0 169px; overflow: hidden; background: linear-gradient(#fff, #fff) 18px 0 / 816px 100% no-repeat, linear-gradient(90deg, #e8e8e8, #c2c2c2 18px, #c2c2c2 834px, #e8e8e8); color: #000; font: 15px/20px "Liberation Serif", serif; }
.page u { text-decoration: none; padding-bottom: 2px; background: url("data:image/svg+xml,%3Csvg xmlns='http://www.w3.org/2000/svg' width='4' height='3'%3E%3Cpath d='M0 2.500L2 .5 4 2.500' fill='none' stroke='%23f00000' stroke-width='1.100'/%3E%3C/svg%3E") 0 100% repeat-x; }
.h42 { font-size: 16px; line-height: 20px; margin-top: -4px; letter-spacing: .63px; }
.para { margin-top: 31px; display: grid; grid-template-columns: 66px 518px; margin-left: -66px; }
.para p { grid-column: 2; height: 20px; white-space: nowrap; }
.l1 { padding-left: 48px; letter-spacing: .42px; }
.l2 { letter-spacing: .41px; }
.para-mark { grid-row: 1; margin-top: 1px; }
.h421 { margin-top: 13px; font-size: 15.3px; line-height: 20px; letter-spacing: .4px; }
.feature-table { margin: 15px 0 0 102px; }
.th { font-family: Lato, sans-serif; font-weight: bold; }
.td { font-family: Lato, sans-serif; font-weight: 800; font-size: 8.5px; }
.caption { margin: 25px 0 0 205px; font-size: 14.67px; letter-spacing: .08px; }

.status { display: grid; align-items: center; padding: 0 0 0 9px; border-top: 1px solid #dedede; color: #666; white-space: nowrap; grid-template-columns: 75px 10px 64px 10px 74px 85px 11px 46px 69px 10px 69px 10px 19px 69px 11px 281px 26px 22px 30px 26px 25px 29px 12px 32px 16px 23px 149px 26px 1fr; }
.status span { letter-spacing: -.1px; }
.status i { width: 1px; height: 24px; background: #dedede; }
.status svg, .status .pct, .status .spell, .status .caret { margin-top: -1px; }
.status .caret { width: 6px; }
.view-on { width: 23px; height: 24px; background: #c4c4c4; border-radius: 3px; display: grid; place-items: center; }
.status .view-on svg { margin: 0; }

.taskbar { background: #6b1018; display: flex; }
.start { width: 48px; display: grid; place-items: center; }
.search { width: 344px; background: #f6f3f2; border: 1px solid #bdb8b8; display: flex; align-items: center; padding-left: 11px; gap: 10px; font-size: 14px; color: #333; letter-spacing: -.05px; }
.taskview { width: 51px; display: grid; place-items: center; padding-right: 3px; }
.app { width: 49px; display: grid; place-items: center; }
.app.open { background: linear-gradient(#ffa6ad, #ffa6ad) 4px 100% / 40px 2px no-repeat; }
.app.current-app { padding-right: 2px; background: linear-gradient(#ffa6ad, #ffa6ad) 0 100% / 45px 2px no-repeat, linear-gradient(90deg, #9f2530 45px, #85202a 45px, #85202a 48px, #6b1018 48px); }
.tray { margin-left: auto; width: 238px; display: grid; align-items: center; color: #fff; grid-template-columns: 23px 25px 26px 21px 23px 78px 37px 1fr; }
.clock { width: 64px; font-size: 11.5px; line-height: 18px; text-align: center; letter-spacing: -.2px; }
.note { font: 600 12px "Noto Sans", sans-serif; fill: #fff; }
.desk { width: 1px; height: 40px; background: #a06a6e; justify-self: end; margin-right: 4px; }
```
